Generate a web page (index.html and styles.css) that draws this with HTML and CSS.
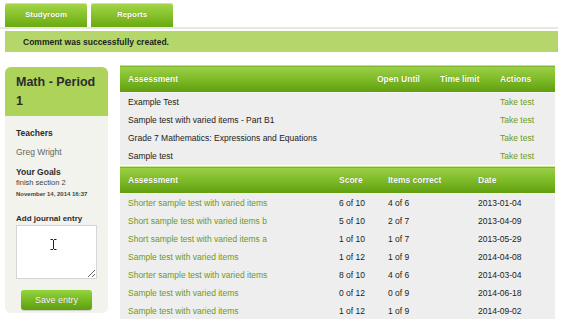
FILE: index.html
```html
<!DOCTYPE html>
<html lang="en">
<head>
  <meta charset="UTF-8">
  <title>Studyroom</title>
  <link rel="stylesheet" href="styles.css">
</head>
<body>
  <div class="page">
    <div class="tabs">
      <a class="tab" href="#">Studyroom</a>
      <a class="tab" href="#">Reports</a>
    </div>
    <div class="flash">Comment was successfully created.</div>

    <div class="layout">
      <aside class="sidebar">
        <div class="sidebar-header">
          <h2>Math - Period 1</h2>
        </div>
        <div class="sidebar-body">
          <h3 class="label">Teachers</h3>
          <p class="teacher">Greg Wright</p>
          <h3 class="label goals">Your Goals</h3>
          <p class="goal">finish section 2</p>
          <p class="stamp">November 14, 2014 16:37</p>
          <h3 class="label journal">Add journal entry</h3>
          <div class="journal-box">
            <textarea class="journal-input"></textarea>
            <!-- mouse cursor in the screenshot -->
            <svg class="ibeam" width="7" height="11" viewBox="0 0 7 11">
              <path d="M0.5 0.5h2.5M4 0.5h2.5M3.5 1v9M0.5 10.5h2.5M4 10.5h2.5" stroke="#222" stroke-width="1" fill="none"/>
            </svg>
          </div>
          <button class="save">Save entry</button>
        </div>
      </aside>

      <div class="content">
        <table class="grid">
          <colgroup>
            <col style="width:249px"><col style="width:63px"><col style="width:60px"><col>
          </colgroup>
          <thead>
            <tr><th>Assessment</th><th>Open Until</th><th>Time limit</th><th>Actions</th></tr>
          </thead>
          <tbody id="open-tests"></tbody>
        </table>

        <table class="grid">
          <colgroup>
            <col style="width:211px"><col style="width:49px"><col style="width:90px"><col>
          </colgroup>
          <thead>
            <tr><th>Assessment</th><th>Score</th><th>Items correct</th><th>Date</th></tr>
          </thead>
          <tbody id="results"></tbody>
        </table>
      </div>
    </div>
  </div>

  <script>
    const openTests = [
      "Example Test",
      "Sample test with varied items - Part B1",
      "Grade 7 Mathematics: Expressions and Equations",
      "Sample test"
    ];

    const results = [
      { name: "Shorter sample test with varied items", score: "6 of 10", correct: "4 of 6", date: "2013-01-04" },
      { name: "Short sample test with varied items b", score: "5 of 10", correct: "2 of 7", date: "2013-04-09" },
      { name: "Short sample test with varied items a", score: "1 of 10", correct: "1 of 7", date: "2013-05-29" },
      { name: "Sample test with varied items", score: "1 of 12", correct: "1 of 9", date: "2014-04-08" },
      { name: "Shorter sample test with varied items", score: "8 of 10", correct: "4 of 6", date: "2014-03-04" },
      { name: "Sample test with varied items", score: "0 of 12", correct: "0 of 9", date: "2014-06-18" },
      { name: "Sample test with varied items", score: "1 of 12", correct: "1 of 9", date: "2014-09-02" }
    ];

    document.getElementById("open-tests").innerHTML = openTests.map(name => `
      <tr><td>${name}</td><td></td><td></td><td><a href="#">Take test</a></td></tr>
    `).join("");

    document.getElementById("results").innerHTML = results.map(r => `
      <tr><td><a href="#">${r.name}</a></td><td>${r.score}</td><td>${r.correct}</td><td>${r.date}</td></tr>
    `).join("");
  </script>
</body>
</html>
```

FILE: styles.css
```css
body {
  margin: 0;
  font-family: "Liberation Sans", Arial, sans-serif;
  background: #fff;
  color: #222;
}

.page {
  width: 558px;
}

.tabs {
  display: flex;
  gap: 4px;
  padding: 3px 0 0 5px;
  border-bottom: 2px solid #e6e9de;
}

.tab {
  width: 82px;
  height: 24px;
  line-height: 24px;
  text-align: center;
  font-size: 8px;
  font-weight: bold;
  color: #fff;
  text-decoration: none;
  border-radius: 3px 3px 0 0;
  background: linear-gradient(#a6d64c, #86c22c 50%, #6aa912);
  box-shadow: inset 0 1px 0 #c9e98d;
  text-shadow: 0 0 1px rgba(0, 0, 0, 0.3);
}

.flash {
  margin: 2px 0 0 5px;
  height: 21px;
  line-height: 22px;
  padding-left: 18px;
  background: #b5d66a;
  font-size: 8.5px;
  font-weight: bold;
  color: #1e1e1e;
}

.layout {
  display: flex;
  align-items: flex-start;
  gap: 12px;
  padding: 13px 0 0 5px;
}

.sidebar {
  width: 103px;
  margin-top: 2px;
  border-radius: 6px;
  background: #f1f3ec;
  overflow: hidden;
}

.sidebar-header {
  background: #add35b;
  padding: 6px 11px 5px;
}

.sidebar-header h2 {
  margin: 0;
  font-size: 12.5px;
  line-height: 19px;
  color: #2c2c2c;
}

.sidebar-body {
  padding: 11px 11px 3px;
}

.label {
  margin: 0;
  font-size: 8.5px;
  line-height: 12px;
  color: #2c2c2c;
}

.teacher {
  margin: 7px 0 0;
  font-size: 8.5px;
  line-height: 12px;
  color: #666;
}

.goals {
  margin-top: 8px;
}

.goal {
  margin: 0;
  font-size: 7.5px;
  line-height: 10px;
  color: #444;
}

.stamp {
  margin: 1px 0 0;
  font-size: 6px;
  font-weight: bold;
  line-height: 10px;
  color: #444;
}

.journal {
  margin-top: 14px;
  font-size: 8px;
}

.journal-box {
  position: relative;
}

.journal-input {
  display: block;
  box-sizing: border-box;
  width: 81px;
  height: 54px;
  margin: 0;
  border: 1px solid #d6d6d6;
  background: #fff;
}

.ibeam {
  position: absolute;
  left: 34px;
  top: 14px;
}

.save {
  display: block;
  width: 71px;
  height: 20px;
  margin: 11px 0 0 5px;
  border: none;
  border-radius: 3px;
  background: linear-gradient(#93d53e, #74b71f 55%, #5d9e10);
  box-shadow: 0 1px 1px rgba(0, 0, 0, 0.15);
  color: #fff;
  font-family: inherit;
  font-size: 9px;
  text-shadow: 0 0 1px rgba(0, 0, 0, 0.35);
  padding: 0;
}

.content {
  width: 435px;
}

.grid {
  width: 100%;
  border-collapse: collapse;
  table-layout: fixed;
  background: #eeeeee;
  font-size: 8.5px;
}

.grid + .grid {
  margin-top: 1px;
}

.grid th {
  height: 26px;
  padding: 0 8px;
  text-align: left;
  font-size: 8.5px;
  color: #fff;
  background: linear-gradient(#9ccf48, #80bd2a 45%, #5f9d0e);
  border-top: 1px solid #c6e48e;
  border-bottom: 1px solid #f6f6f6;
  text-shadow: 0 0 1px rgba(0, 0, 0, 0.35);
  white-space: nowrap;
}

.grid td {
  height: 18px;
  padding: 0 8px;
  white-space: nowrap;
  color: #222;
}

.grid a {
  color: #6b9a22;
  text-decoration: none;
}
```
